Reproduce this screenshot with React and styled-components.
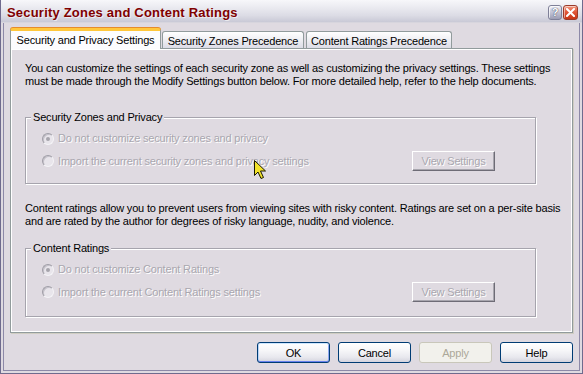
import React from "react";
import styled, { createGlobalStyle, css } from "styled-components";

const FACE = "#DFDAE1";
const UI_FONT = `"Liberation Sans", Arial, sans-serif`;

const GlobalStyle = createGlobalStyle`
  html, body { margin: 0; padding: 0; background: #ffffff; }
  body { font-family: ${UI_FONT}; font-size: 11px; color: #000; }
  * { box-sizing: border-box; }
`;

const Window = styled.div`
  position: relative;
  width: 583px;
  height: 374px;
  display: flex;
  flex-direction: column;
  background: ${FACE};
  border: 1px solid #6F6B8E;
  border-top: none;
  overflow: hidden;
`;

const TitleBar = styled.div`
  height: 23px;
  flex: none;
  display: flex;
  align-items: center;
  padding: 2px 4px 0 6px;
  background: linear-gradient(180deg, #F7F7FA 0%, #EAEAF0 35%, #DCDCE5 70%, #C9C9D6 100%);
  border-bottom: 1px solid #D7D5DD;
`;

const TitleText = styled.div`
  flex: 1;
  font-family: ${UI_FONT};
  font-weight: bold;
  font-size: 13px;
  letter-spacing: 0.2px;
  line-height: 15px;
  color: #800000;
  text-shadow: 1px 1px 0 rgba(255, 255, 255, 0.6);
  white-space: nowrap;
`;

const CaptionButtons = styled.div`
  display: flex;
  gap: 1px;
`;

const CaptionButton = styled.div`
  width: ${(p) => (p.$variant === "close" ? 15 : 14)}px;
  height: 15px;
  border-radius: 3px;
  display: flex;
  align-items: center;
  justify-content: center;
  font-family: ${UI_FONT};
  font-weight: bold;
  font-size: 11px;
  color: #ffffff;
  ${(p) =>
    p.$variant === "close"
      ? css`
          border: 1px solid #9A3A2A;
          background: linear-gradient(180deg, #F29C84 0%, #E2583A 45%, #C73414 100%);
          box-shadow: inset 1px 1px 0 rgba(255, 255, 255, 0.5);
        `
      : css`
          border: 1px solid #7F8098;
          background: linear-gradient(180deg, #F2F2F8 0%, #C2C3D4 50%, #9C9DB4 100%);
          box-shadow: inset 1px 1px 0 rgba(255, 255, 255, 0.7);
          text-shadow: 0 0 1px #4A4B66, 0 0 1px #4A4B66;
        `}
`;

const Body = styled.div`
  flex: 1;
  display: flex;
  padding: 0 2px 2px 2px;
  min-height: 0;
  min-width: 0;
`;

const Client = styled.div`
  flex: 1;
  display: flex;
  flex-direction: column;
  padding: 5px 6px 7px 6px;
  border: 1px solid #8D89A8;
  border-top: none;
  min-height: 0;
  min-width: 0;
`;

const TabStrip = styled.div`
  height: 20px;
  flex: none;
  display: flex;
  align-items: flex-end;
  gap: 1px;
  position: relative;
  z-index: 1;
`;

const Tab = styled.div`
  width: ${(p) => p.$w}px;
  flex: none;
  display: flex;
  align-items: center;
  justify-content: center;
  white-space: nowrap;
  letter-spacing: -0.18px;
  border: 1px solid #919B9C;
  border-bottom: none;
  border-radius: 3px 3px 0 0;
  ${(p) =>
    p.$active
      ? css`
          height: 21px;
          margin-bottom: -1px;
          background: #FCFCFE;
          border-top: 3px solid #FFC73C;
          box-shadow: 0 -1px 0 #E68B2C;
        `
      : css`
          height: 17px;
          margin-left: ${p.$ml || 0}px;
          background: linear-gradient(180deg, #FFFFFF 0%, #F0F0F4 45%, #DCDCE6 100%);
          padding-top: 1px;
        `}
`;

const Panel = styled.div`
  flex: 1;
  min-height: 0;
  min-width: 0;
  padding: 13px 17px 0 14px;
  border: 1px solid #919B9C;
  box-shadow: inset 1px 1px 0 #FFFFFF, inset -1px -1px 0 #FFFFFF, 1px 1px 0 #CFCDC2;
  display: flex;
  flex-direction: column;
  align-items: flex-start;
`;

const Paragraph = styled.p`
  margin: 0 0 ${(p) => p.$mb}px 0;
  line-height: 13px;
  white-space: nowrap;
  letter-spacing: -0.18px;
`;

const Group = styled.fieldset`
  width: 511px;
  margin: 0 0 ${(p) => p.$mb || 0}px 0;
  padding: 8px 40px ${(p) => p.$pb}px 5px;
  border: 1px solid #A6A4AD;
  box-shadow: inset 1px 1px 0 #FFFFFF, 1px 1px 0 #FFFFFF;
  min-inline-size: 0;
`;

const Legend = styled.legend`
  padding: 0 2px;
  line-height: 13px;
  background: ${FACE};
  letter-spacing: -0.18px;
`;

const Rows = styled.div`
  display: flex;
  flex-direction: column;
  gap: 6px;
  padding-left: 11px;
`;

const OptionRow = styled.div`
  display: flex;
  align-items: center;
  min-height: 13px;
`;

const Radio = styled.span`
  position: relative;
  flex: none;
  width: 12px;
  height: 12px;
  margin-right: 4px;
  border-radius: 50%;
  border: 1px solid;
  border-color: #9F9DA6 #F4F3F6 #F4F3F6 #9F9DA6;
  background: #E8E5EB;
  box-shadow: inset 1px 1px 0 #C4C1C9;
  ${(p) =>
    p.$checked &&
    css`
      &::after {
        content: "";
        position: absolute;
        left: 3px;
        top: 3px;
        width: 4px;
        height: 4px;
        border-radius: 50%;
        background: #A6A4AC;
      }
    `}
`;

const OptionLabel = styled.span`
  line-height: 13px;
  white-space: nowrap;
  letter-spacing: -0.18px;
  color: #A9A7AF;
  text-shadow: 1px 1px 0 #FFFFFF;
`;

const ClassicButton = styled.button`
  margin-left: auto;
  width: 83px;
  height: 20px;
  padding: 0;
  font-family: ${UI_FONT};
  font-size: 11px;
  letter-spacing: -0.18px;
  color: #A9A7AF;
  text-shadow: 1px 1px 0 #FFFFFF;
  background: ${FACE};
  border: 1px solid;
  border-color: #FFFFFF #6E6C76 #6E6C76 #FFFFFF;
  box-shadow: inset -1px -1px 0 #A8A6AE;
`;

const ButtonRow = styled.div`
  flex: none;
  margin-top: 9px;
  display: flex;
  justify-content: flex-end;
  gap: 8px;
`;

const PushButton = styled.button`
  width: 73px;
  height: 21px;
  padding: 0;
  font-family: ${UI_FONT};
  font-size: 11px;
  letter-spacing: -0.18px;
  border-radius: 3px;
  color: #000;
  border: 1px solid #003C74;
  background: linear-gradient(180deg, #FFFFFF 0%, #F6F6F8 40%, #E8E8EE 75%, #D4D4DE 100%);
  ${(p) =>
    p.$default &&
    css`
      box-shadow: inset 0 1px 0 #CEE7FF, inset 0 -1px 0 #6982EE, inset 1px 0 0 #B8D4F8,
        inset -1px 0 0 #8FA8F0;
    `}
  &:disabled {
    color: #ACA899;
    border-color: #C9C7BA;
    background: #F2F1EC;
    box-shadow: none;
  }
`;

const Cursor = styled.svg`
  position: absolute;
  left: 252px;
  top: 159px;
  pointer-events: none;
`;

function Option({ checked, children }) {
  return (
    <OptionRow>
      <Radio $checked={checked} />
      <OptionLabel>{children}</OptionLabel>
    </OptionRow>
  );
}

function SettingsGroup({ title, first, second, mb, pb }) {
  return (
    <Group $mb={mb} $pb={pb}>
      <Legend>{title}</Legend>
      <Rows>
        <Option checked>{first}</Option>
        <OptionRow>
          <Radio />
          <OptionLabel>{second}</OptionLabel>
          <ClassicButton disabled>View Settings</ClassicButton>
        </OptionRow>
      </Rows>
    </Group>
  );
}

export default function App() {
  return (
    <>
      <GlobalStyle />
      <Window>
        <TitleBar>
          <TitleText>Security Zones and Content Ratings</TitleText>
          <CaptionButtons>
            <CaptionButton $variant="help">?</CaptionButton>
            <CaptionButton $variant="close">
              <svg width="9" height="9" viewBox="0 0 9 9">
                <path d="M1 1 L8 8 M8 1 L1 8" stroke="#FFFFFF" strokeWidth="2" strokeLinecap="square" />
              </svg>
            </CaptionButton>
          </CaptionButtons>
        </TitleBar>
        <Body>
          <Client>
            <TabStrip>
              <Tab $active $w={151}>Security and Privacy Settings</Tab>
              <Tab $w={142}>Security Zones Precedence</Tab>
              <Tab $w={146} $ml={1}>Content Ratings Precedence</Tab>
            </TabStrip>
            <Panel>
              <Paragraph $mb={23}>
                You can customize the settings of each security zone as well as customizing the privacy settings. These settings
                <br />
                must be made through the Modify Settings button below. For more detailed help, refer to the help documents.
              </Paragraph>
              <SettingsGroup
                title="Security Zones and Privacy"
                first="Do not customize security zones and privacy"
                second="Import the current security zones and privacy settings"
                mb={18}
                pb={12}
              />
              <Paragraph $mb={14}>
                Content ratings allow you to prevent users from viewing sites with risky content. Ratings are set on a per-site basis
                <br />
                and are rated by the author for degrees of risky language, nudity, and violence.
              </Paragraph>
              <SettingsGroup
                title="Content Ratings"
                first="Do not customize Content Ratings"
                second="Import the current Content Ratings settings"
                pb={14}
              />
            </Panel>
            <ButtonRow>
              <PushButton $default>OK</PushButton>
              <PushButton>Cancel</PushButton>
              <PushButton disabled>Apply</PushButton>
              <PushButton>Help</PushButton>
            </ButtonRow>
          </Client>
        </Body>
        <Cursor width="14" height="21" viewBox="0 0 14 21">
          <path
            d="M1.5 1.5 L1.5 16.5 L5 13 L8 19.5 L10.5 18.5 L7.5 12 L12.5 12 Z"
            fill="#F2E22A"
            stroke="#1A1A00"
            strokeWidth="1"
            strokeLinejoin="miter"
          />
        </Cursor>
      </Window>
    </>
  );
}
